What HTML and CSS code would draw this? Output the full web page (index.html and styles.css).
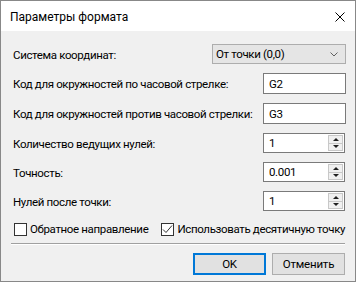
FILE: index.html
```html
<!DOCTYPE html>
<html lang="ru">
<head>
    <meta charset="UTF-8">
    <title>Параметры формата</title>
    <link rel="stylesheet" href="styles.css">
</head>
<body>
<div class="window">
    <div class="title-bar">
        <span class="title">Параметры формата</span>
        <svg class="close" width="10" height="10" viewBox="0 0 10 10">
            <path d="M0.5 0.5 L9.5 9.5 M9.5 0.5 L0.5 9.5" stroke="#000" stroke-width="1" fill="none"/>
        </svg>
    </div>
    <div class="content">
        <div class="form">
            <div class="row">
                <span class="label">Система координат:</span>
                <div class="combo">
                    <span>От точки (0,0)</span>
                    <svg width="8" height="5" viewBox="0 0 8 5">
                        <path d="M0.5 0.5 L4 4 L7.5 0.5" stroke="#606060" stroke-width="1" fill="none"/>
                    </svg>
                </div>
            </div>
            <div class="row">
                <span class="label">Код для окружностей по часовой стрелке:</span>
                <div class="field tall">G2</div>
            </div>
            <div class="row">
                <span class="label">Код для окружностей против часовой стрелки:</span>
                <div class="field tall">G3</div>
            </div>
            <div class="row">
                <span class="label">Количество ведущих нулей:</span>
                <div class="field spin">
                    <span class="value">1</span>
                    <div class="arrows">
                        <div class="arrow up"></div>
                        <div class="arrow down"></div>
                    </div>
                </div>
            </div>
            <div class="row">
                <span class="label">Точность:</span>
                <div class="field spin">
                    <span class="value">0.001</span>
                    <div class="arrows">
                        <div class="arrow up"></div>
                        <div class="arrow down"></div>
                    </div>
                </div>
            </div>
            <div class="row">
                <span class="label">Нулей после точки:</span>
                <div class="field spin">
                    <span class="value">1</span>
                    <div class="arrows">
                        <div class="arrow up"></div>
                        <div class="arrow down"></div>
                    </div>
                </div>
            </div>
        </div>
        <div class="checks">
            <label class="check">
                <span class="box"></span>
                <span>Обратное направление</span>
            </label>
            <label class="check">
                <span class="box">
                    <svg width="11" height="11" viewBox="0 0 11 11">
                        <path d="M1 5.5 L4 8.5 L10 1.5" stroke="#333" stroke-width="1" fill="none"/>
                    </svg>
                </span>
                <span>Использовать десятичную точку</span>
            </label>
        </div>
        <div class="separator"></div>
        <div class="buttons">
            <button class="btn default">OK</button>
            <button class="btn">Отменить</button>
        </div>
    </div>
</div>
</body>
</html>
```

FILE: styles.css
```css
body {
    margin: 0;
    font-family: Roboto, "Liberation Sans", sans-serif;
    font-size: 11.5px;
    letter-spacing: -0.35px;
    color: #000000;
    white-space: nowrap;
}

.window {
    width: 356px;
    height: 282px;
    box-sizing: border-box;
    border: 1px solid #888888;
    display: flex;
    flex-direction: column;
}

.title-bar {
    height: 30px;
    background-color: #ffffff;
    display: flex;
    align-items: center;
    justify-content: space-between;
    padding: 0 10px 0 9px;
}

.title {
    font-size: 12px;
    letter-spacing: 0;
    padding-top: 1px;
}

.close {
    margin-top: 1px;
}

.content {
    flex: 1;
    background-color: #f0f0f0;
    padding: 13px 9px 0 12px;
}

.form {
    display: flex;
    flex-direction: column;
    gap: 9px;
}

.row {
    display: flex;
    align-items: center;
    justify-content: space-between;
    height: 20px;
}

.row:nth-child(2),
.row:nth-child(3) {
    height: 21px;
}

.label {
    padding-top: 1px;
}

.combo {
    width: 134px;
    height: 20px;
    box-sizing: border-box;
    background-color: #e5e5e5;
    border: 1px solid #adadad;
    display: flex;
    align-items: center;
    justify-content: space-between;
    padding: 0 7px 0 3px;
}

.field {
    width: 83px;
    height: 20px;
    box-sizing: border-box;
    background-color: #ffffff;
    border: 1px solid #7a7a7a;
    display: flex;
    align-items: center;
    padding-left: 5px;
}

.field.tall {
    height: 21px;
}

.spin {
    width: 82px;
    margin-right: 1px;
    padding-left: 0;
    justify-content: space-between;
}

.spin .value {
    padding-left: 5px;
}

.arrows {
    width: 15px;
    height: 16px;
    margin-right: 1px;
    display: flex;
    flex-direction: column;
    border: 1px solid #c8c8c8;
    box-sizing: border-box;
    background-color: #f0f0f0;
}

.arrow {
    flex: 1;
    display: flex;
    align-items: center;
    justify-content: center;
}

.arrow.up {
    border-bottom: 1px solid #c8c8c8;
}

.arrow.up::after {
    content: '';
    border-left: 3px solid transparent;
    border-right: 3px solid transparent;
    border-bottom: 3px solid #202020;
}

.arrow.down::after {
    content: '';
    border-left: 3px solid transparent;
    border-right: 3px solid transparent;
    border-top: 3px solid #202020;
}

.checks {
    display: flex;
    gap: 13px;
    height: 14px;
    margin-top: 11px;
    margin-left: 1px;
}

.check {
    display: flex;
    align-items: center;
    gap: 3px;
}

.box {
    width: 13px;
    height: 13px;
    box-sizing: border-box;
    border: 1px solid #333333;
    background-color: #ffffff;
    display: flex;
    align-items: center;
    justify-content: center;
}

.separator {
    height: 1px;
    background-color: #a0a0a0;
    border-bottom: 1px solid #ffffff;
    margin: 7px 1px 0 -2px;
}

.buttons {
    display: flex;
    justify-content: flex-end;
    gap: 6px;
    margin-top: 8px;
    margin-right: 1px;
}

.btn {
    width: 73px;
    height: 22px;
    box-sizing: border-box;
    font-family: Roboto, "Liberation Sans", sans-serif;
    font-size: 11.5px;
    letter-spacing: -0.2px;
    color: #000000;
    background-color: #e1e1e1;
    border: 1px solid #adadad;
    padding: 0;
}

.btn.default {
    border: 2px solid #0078d7;
}
```
